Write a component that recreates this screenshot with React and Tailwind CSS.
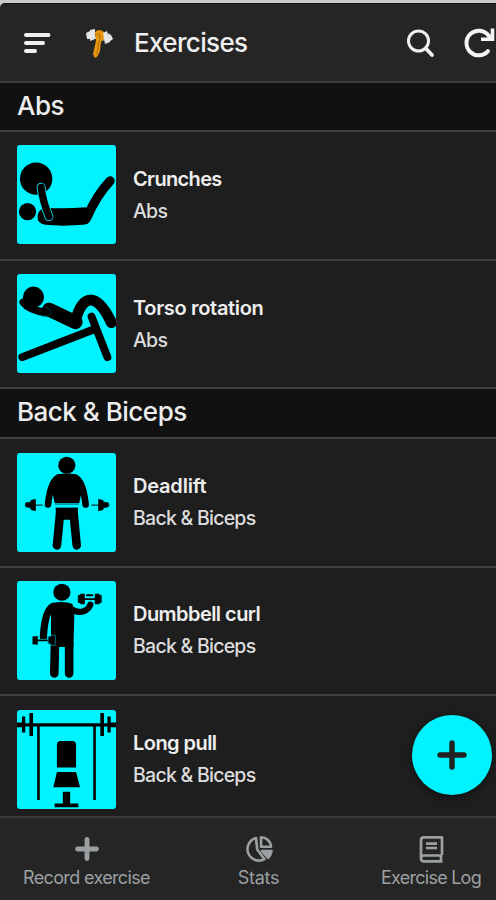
const CYAN = "#00f3ff";

function CrunchesArt() {
    return (
        <g>
            <circle cx="58" cy="102" r="49" fill="#000" stroke="none" />
            <circle cx="32" cy="202" r="26" fill="#000" stroke="none" />
            <path d="M62 217 Q64 193 88 190 Q140 194 208 189 L228 207 Q226 243 200 242 Q140 247 85 242 Q62 239 62 217Z" fill="#000" stroke="none" />
            <path d="M213 217 Q242 151 282 109" strokeWidth="28" />
            <path d="M73 128 Q78 170 97 217" stroke={CYAN} strokeWidth="27" />
            <path d="M73 128 Q78 170 97 217" strokeWidth="22" />
        </g>
    );
}

function TorsoArt() {
    return (
        <g>
            <circle cx="50" cy="70" r="32" fill="#000" stroke="none" />
            <path d="M16 252 L232 168 M226 129 L274 252" strokeWidth="24" />
            <path d="M96 104 Q134 132 175 149 Q192 80 221 79 Q252 77 286 147" strokeWidth="33" />
            <path d="M97 108 L178 146" strokeWidth="42" />
            <path d="M19 86 Q38 111 91 117" strokeWidth="23" />
            <path d="M88 101 Q108 111 104 120 Q99 128 76 128" stroke="#004b50" strokeWidth="2" />
        </g>
    );
}

function DeadliftArt() {
    return (
        <g>
            <path d="M24 158 H78 M225 158 H280" strokeWidth="3" strokeLinecap="butt" />
            <circle cx="151" cy="37" r="26" fill="#000" stroke="none" />
            <path d="M123 66 Q150 62 179 66 L200 90 L186 154 H117 L102 90Z" fill="#000" strokeWidth="4" />
            <path d="M120 78 Q100 96 94 156 M182 78 Q202 96 208 156" strokeWidth="20" />
            <path d="M117 164 H185 L183 202 H119Z" fill="#000" stroke="none" />
            <path d="M131 178 L121 280 M171 178 L181 280" strokeWidth="26" />
            <path d="M115 154 H188 M115 164 H188" stroke={CYAN} strokeWidth="3" />
            <path d="M27 151 L41 149 L43 143 L56 141 V175 L43 172 L41 166 L27 163Z M276 151 L262 149 L260 143 L247 141 V175 L260 172 L262 166 L276 163Z" fill="#000" strokeWidth="2" />
        </g>
    );
}

function CurlArt() {
    return (
        <g>
            <circle cx="136" cy="34" r="26" fill="#000" stroke="none" />
            <path d="M105 67 Q145 59 168 70 L174 95 L171 200 H103 V90Z" fill="#000" stroke="none" />
            <path d="M108 78 Q84 92 80 169" strokeWidth="22" />
            <path d="M157 78 Q180 99 201 92 Q216 88 222 72" strokeWidth="19" />
            <path d="M115 190 L113 280 M158 190 V280" strokeWidth="26" />
            <path d="M55 180 H108 M198 55 H245" stroke={CYAN} strokeWidth="9" />
            <path d="M55 180 H108 M198 55 H245" strokeWidth="5" />
            <path d="M47 168 L63 167 V193 L47 192Z" fill="#000" stroke="none" />
            <path d="M95 168 L103 168 V164 L116 164 V195 L103 195 V191 L95 190Z" fill="#000" stroke="#00878d" strokeWidth="2.5" />
            <path d="M187 44 H193 V40 H204 V69 H193 V65 H187Z M254 44 H249 V40 H237 V69 H249 V65 H254Z" fill="#000" strokeWidth="3" />
            <path d="M212 43 H228" strokeWidth="6" />
            <path d="M136 280 V201" stroke={CYAN} strokeWidth="4" />
        </g>
    );
}

function LongPullArt() {
    return (
        <g strokeLinecap="butt">
            <path d="M0 45 H20 M280 45 H300" strokeWidth="15" />
            <path d="M20 45 H280" strokeWidth="10" />
            <path d="M20 20 V68 M279 20 V68" strokeWidth="10" />
            <path d="M43 9 V79 M258 9 V79" strokeWidth="11" />
            <path d="M65 45 V273 M235 45 V273" strokeWidth="8" />
            <path d="M129 94 H171 Q179 97 179 104 V174 H121 V104 Q121 97 129 94Z" fill="#000" stroke="none" />
            <path d="M121 188 H179 L191 234 H110Z" fill="#000" stroke="none" />
            <path d="M150 248 V287" strokeWidth="22" />
            <path d="M114 289 H186" strokeWidth="11" />
        </g>
    );
}

const sections = [
    {
        name: "Abs",
        header: "h-[49px]",
        exercises: [
            { name: "Crunches", art: CrunchesArt, row: "h-[129px] pt-[13px]", text: "pt-[18px]", title: "tracking-[-0.65px]" },
            { name: "Torso rotation", art: TorsoArt, row: "h-[128px] pt-[13px]", text: "pt-[18px]", title: "tracking-[-0.32px]" },
        ],
    },
    {
        name: "Back & Biceps",
        header: "h-[50px]",
        exercises: [
            { name: "Deadlift", art: DeadliftArt, row: "h-[129px] pt-[14px]", text: "pt-[17px]", title: "tracking-[-0.2px]" },
            { name: "Dumbbell curl", art: CurlArt, row: "h-[128px] pt-[13px]", text: "pt-[17px]", title: "tracking-[-0.55px]" },
            { name: "Long pull", art: LongPullArt, row: "h-[128px] pt-[14px]", text: "pt-[17px]", title: "tracking-[-0.55px]" },
        ],
    },
];

function Logo() {
    return (
        <svg width="30" height="32" viewBox="0 0 30 32" className="ml-[33px]">
            <path d="M4 9 L25 13" stroke="#bbb" strokeWidth="3" />
            <path d="M11 5 Q15 1 20 5 L21 11 L17 15 L16 24 Q14 30 11 31 L9 27 L12 14Z" fill="#e7960c" />
            <path d="M13 7 Q18 8 15 16 L13 27" fill="none" stroke="#b87408" strokeWidth="1.3" />
            <path d="M2 6 L6 4 L6 12 L3 12Z M6 3 L11 2 L11 12 L6 14Z" fill="#e6e6e6" />
            <path d="M19 6 L23 4 L26 15 L21 17Z M24 6 L27 8 L29 12 L25 15Z" fill="#e6e6e6" />
        </svg>
    );
}

function Header() {
    return (
        <header className="flex h-[80px] shrink-0 items-center rounded-tl-[5px] border-t border-b-2 border-t-[#111111] border-b-[#393b3b] bg-[#252525] pl-6">
            <svg width="27" height="22" viewBox="0 0 27 22" fill="none" stroke="#efefef" strokeWidth="4" strokeLinecap="round">
                <path d="M2 3 H24.5 M2 11 H19 M2 19 H11" />
            </svg>
            <Logo />
            <h1 className="ml-[20px] text-[26px] leading-8 font-[450] tracking-[-0.65px] text-[#f0f0f0]">Exercises</h1>
            <svg width="28" height="30" viewBox="0 0 28 30" fill="none" stroke="#efefef" strokeLinecap="round" className="ml-auto">
                <circle cx="11.5" cy="13" r="10" strokeWidth="3" />
                <path d="M18.7 20.2 L25 27" strokeWidth="3.8" />
            </svg>
            <svg width="33" height="32" viewBox="0 0 33 32" fill="none" stroke="#f4f4f4" strokeWidth="4" className="ml-[28px]">
                <path d="M25.5 8.5 A12.3 12.3 0 1 0 25 24.2" strokeLinecap="round" />
                <path d="M29.5 1.5 V12.2 H18" strokeWidth="3.6" />
                <path d="M23 12 L31 4 V12Z" fill="#f4f4f4" stroke="none" />
            </svg>
        </header>
    );
}

function ExerciseRow({ exercise, group }) {
    const Art = exercise.art;
    return (
        <li className={`flex shrink-0 items-start border-b-2 border-[#3f3f3f] pl-[17px] ${exercise.row}`}>
            <div className="size-[99px] overflow-hidden rounded-[3px] bg-[#00f3ff]">
                <svg viewBox="0 0 300 300" fill="none" stroke="#000" strokeLinecap="round" strokeLinejoin="round" className="size-full">
                    <Art />
                </svg>
            </div>
            <div className={`ml-[17px] ${exercise.text}`}>
                <h3 className={`text-[20px] leading-8 font-semibold text-[#eeeeee] ${exercise.title}`}>{exercise.name}</h3>
                <p className="text-[19.5px] leading-8 font-[450] tracking-[-0.75px] text-[#dddddd]">{group}</p>
            </div>
        </li>
    );
}

function BottomNav() {
    return (
        <nav className="flex h-[84px] shrink-0 border-t-2 border-[#3b3b3b] bg-[#252525] pt-[17px] text-[#9ba0a2]">
            <div className="flex w-[173px] flex-col items-center">
                <svg width="28" height="28" viewBox="0 0 28 28" stroke="currentColor" strokeWidth="4.8" strokeLinecap="round">
                    <path d="M14 4.5 V23.5 M4.5 14 H23.5" />
                </svg>
                <span className="text-[18px] leading-[30px] tracking-[-0.65px]">Record exercise</span>
            </div>
            <div className="flex w-[171px] flex-col items-center">
                <svg width="28" height="28" viewBox="0 0 28 28" fill="none" stroke="currentColor" strokeWidth="2.6" strokeLinejoin="round">
                    <path d="M11 3 A11.5 11.5 0 1 0 19.5 24.2 L12.2 14.5 Z" />
                    <path d="M16 2.3 V11.8 H26 A10 10 0 0 0 16 2.3Z" />
                    <path d="M17 16 H26.5 Q26 20 23.2 22.8Z" fill="currentColor" />
                </svg>
                <span className="text-[18px] leading-[30px] tracking-[-0.3px]">Stats</span>
            </div>
            <div className="ml-auto flex w-[130px] flex-col items-center">
                <svg width="28" height="28" viewBox="0 0 28 28" fill="none" stroke="currentColor" strokeWidth="2.7" strokeLinejoin="round">
                    <path d="M25 20 V2.3 H6.5 Q4 2.3 4 5.5 V23 Q4 26.3 6.5 26.3 H25.5 M24 20 V26 M25 20.5 H6.5 Q4 20.5 4 23.5" />
                    <path d="M9 8.6 H20 M9 13 H20" />
                </svg>
                <span className="text-[18px] leading-[30px] tracking-[-0.75px]">Exercise Log</span>
            </div>
        </nav>
    );
}

export default function App() {
    return (
        <div className="relative flex h-[900px] w-[496px] flex-col overflow-hidden bg-[#c8cbca] pt-[3px] font-['Inter','Liberation_Sans',sans-serif] whitespace-nowrap">
            <Header />
            <main className="flex min-h-0 flex-1 flex-col overflow-hidden bg-[#1e1e1e]">
                {sections.map((section) => (
                    <section key={section.name} className="shrink-0">
                        <h2 className={`border-b-2 border-[#3f3f3f] bg-[#111111] pt-[7px] pl-[17px] text-[26px] leading-8 font-[450] tracking-[-0.5px] text-[#ededed] ${section.header}`}>
                            {section.name}
                        </h2>
                        <ul>
                            {section.exercises.map((exercise) => (
                                <ExerciseRow key={exercise.name} exercise={exercise} group={section.name} />
                            ))}
                        </ul>
                    </section>
                ))}
            </main>
            <BottomNav />
            <button className="absolute top-[715px] left-[412px] flex size-[80px] items-center justify-center rounded-full bg-[#00f3ff] shadow-[0_2px_7px_rgba(0,0,0,0.5)]">
                <svg width="30" height="30" viewBox="0 0 30 30" stroke="#222" strokeWidth="5.4" strokeLinecap="round">
                    <path d="M15 3 V27 M3 15 H27" />
                </svg>
            </button>
        </div>
    );
}
